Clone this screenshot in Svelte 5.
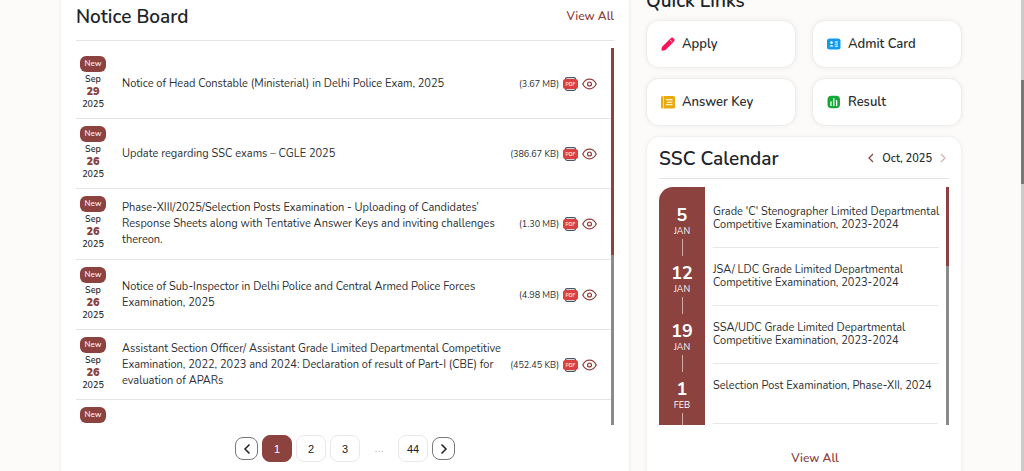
<script>
  const notices = [
    { day: '29', title: 'Notice of Head Constable (Ministerial) in Delhi Police Exam, 2025', size: '3.67 MB' },
    { day: '26', title: 'Update regarding SSC exams – CGLE 2025', size: '386.67 KB' },
    {
      day: '26',
      title: 'Phase-XIII/2025/Selection Posts Examination - Uploading of Candidates’\nResponse Sheets along with Tentative Answer Keys and inviting challenges\nthereon.',
      size: '1.30 MB'
    },
    {
      day: '26',
      title: 'Notice of Sub-Inspector in Delhi Police and Central Armed Police Forces\nExamination, 2025',
      size: '4.98 MB'
    },
    {
      day: '26',
      title: 'Assistant Section Officer/ Assistant Grade Limited Departmental Competitive\nExamination, 2022, 2023 and 2024: Declaration of result of Part-I (CBE) for\nevaluation of APARs',
      size: '452.45 KB'
    }
  ];
  const links = [
    { label: 'Apply', icon: 'pen' },
    { label: 'Admit Card', icon: 'card' },
    { label: 'Answer Key', icon: 'key' },
    { label: 'Result', icon: 'chart' }
  ];
  const events = [
    { day: '5', month: 'JAN', title: "Grade 'C' Stenographer Limited Departmental\nCompetitive Examination, 2023-2024" },
    { day: '12', month: 'JAN', title: 'JSA/ LDC Grade Limited Departmental\nCompetitive Examination, 2023-2024' },
    { day: '19', month: 'JAN', title: 'SSA/UDC Grade Limited Departmental\nCompetitive Examination, 2023-2024' },
    { day: '1', month: 'FEB', title: 'Selection Post Examination, Phase-XII, 2024' }
  ];
  let page = $state(1);
</script>

<main class="page">
  <section class="card board">
    <header class="head">
      <h2>Notice Board</h2>
      <a class="all" href="#notices">View All</a>
    </header>
    <div class="scroller notices">
      <ul>
        {#each notices as n}
          <li class="notice">
            <div class="date">
              <span class="new">New</span>
              <span>Sep</span>
              <b>{n.day}</b>
              <span>2025</span>
            </div>
            <p>{n.title}</p>
            <div class="file">
              <span class="size">({n.size})</span>
              <a href="#pdf" aria-label="Download PDF">
                <svg width="15" height="14" viewBox="0 0 15 14">
                  <path d="M2.5 3V2.2Q2.5 .7 4 .7H11Q12.500 .7 12.500 2.200V3M2.500 11V11.800Q2.500 13.300 4 13.300H11Q12.500 13.300 12.500 11.800V11" fill="#fff" stroke="#4b5563" stroke-width="1.300" />
                  <rect x="0" y="2" width="15" height="10" rx="2.500" fill="#d9403f" />
                  <text x="7.500" y="8.900" text-anchor="middle" font-size="5" font-weight="700" fill="#fbdcdc">PDF</text>
                </svg>
              </a>
              <a href="#view" aria-label="View notice">
                <svg width="15" height="12" viewBox="0 0 16 12" fill="none" stroke="#93423e" stroke-width="1.300">
                  <path d="M.8 6C2.400 2.700 4.900 .9 8 .9S13.600 2.700 15.200 6C13.600 9.300 11.100 11.100 8 11.100S2.400 9.300 .8 6Z" />
                  <circle cx="8" cy="6" r="2.100" />
                </svg>
              </a>
            </div>
          </li>
        {/each}
        <li class="notice"><div class="date"><span class="new">New</span></div></li>
      </ul>
      <div class="track"><div class="thumb" style="height:55%"></div></div>
    </div>
    <nav class="pager" aria-label="Pages">
      <button class="arrow" aria-label="Previous page">
        <svg width="8" height="12" viewBox="0 0 8 12"><path d="M6.500 1.500 2 6l4.500 4.500" /></svg>
      </button>
      {#each [1, 2, 3] as p}
        <button class:on={page === p} onclick={() => (page = p)}>{p}</button>
      {/each}
      <span class="dots">...</span>
      <button class:on={page === 44} onclick={() => (page = 44)}>44</button>
      <button class="arrow" aria-label="Next page">
        <svg width="8" height="12" viewBox="0 0 8 12"><path d="M1.500 1.500 6 6l-4.500 4.500" /></svg>
      </button>
    </nav>
  </section>

  <div class="side">
    <h2>Quick Links</h2>
    <div class="links">
      {#each links as l}
        <a class="link" href="#{l.icon}">
          <svg width="14" height="14" viewBox="0 0 14 14">
            {#if l.icon === 'pen'}
              <path d="M1.200 12.900 1.700 10.300 10 2Q11.100 .9 12.200 2T12.200 4.200L3.900 12.400Z" fill="#fb1558" stroke="#fb1558" stroke-width="1.600" stroke-linejoin="round" />
              <path d="M9.300 3.100 11.100 4.900" stroke="#fff" stroke-width=".8" />
            {:else if l.icon === 'card'}
              <rect x="0" y="1.500" width="13.500" height="11" rx="2.500" fill="#109bee" />
              <circle cx="4.500" cy="5.600" r="1.300" fill="#fff" />
              <path d="M2.300 9.500Q4.500 6.300 6.700 9.500Z" fill="#fff" />
              <path d="M7.800 5H11M7.800 7.100H11M7.800 9.200H11" stroke="#fff" />
            {:else if l.icon === 'key'}
              <rect x="0" y="1" width="14" height="12.500" rx="1.600" fill="#e9aa10" />
              <path d="M2.500 1V13.500" stroke="#fff3cf" stroke-width=".8" />
              <path d="M5 4.700H11.500M6 7.200H11.500M5 9.700H11.500" stroke="#fff" />
            {:else}
              <rect x=".5" y=".8" width="12.500" height="12.500" rx="4" fill="#17a736" />
              <path d="M4 7V10.500M6.800 3.700V10.500M9.600 5.700V10.500" stroke="#fff" stroke-width="1.300" stroke-linecap="round" />
            {/if}
          </svg>
          {l.label}
        </a>
      {/each}
    </div>

    <section class="card calendar">
      <header class="head">
        <h2>SSC Calendar</h2>
        <div class="month">
          <button aria-label="Previous month"><svg width="6" height="10" viewBox="0 0 6 10"><path d="M5 1 1 5l4 4" /></svg></button>
          <span>Oct, 2025</span>
          <button aria-label="Next month" disabled><svg width="6" height="10" viewBox="0 0 6 10"><path d="M1 1l4 4-4 4" /></svg></button>
        </div>
      </header>
      <div class="scroller events">
        <ul>
          {#each events as e}
            <li class="event">
              <div class="when"><b>{e.day}</b><span>{e.month}</span><i></i></div>
              <p>{e.title}</p>
            </li>
          {/each}
        </ul>
        <div class="track"><div class="thumb" style="height:33%"></div></div>
      </div>
      <a class="all more" href="#calendar">View All</a>
    </section>
  </div>
  <div class="pagebar"></div>
</main>

<style>
  :global(body) {
    margin: 0;
    background: #fcfbfa;
  }
  .page {
    position: relative;
    box-sizing: border-box;
    height: 100vh;
    overflow: hidden;
    display: grid;
    grid-template-columns: minmax(0, 570fr) minmax(0, 316fr);
    gap: 16px;
    padding: 0 62px 0 60px;
    font-family: Nunito, Lato, sans-serif;
    font-size: 11px;
    color: #2b2f33;
  }
  h2, p, ul {
    margin: 0;
    padding: 0;
  }
  ul {
    flex: 1;
    min-width: 0;
    list-style: none;
  }
  h2 {
    font-size: 19px;
    line-height: 24px;
    font-weight: 600;
    color: #212529;
  }
  a {
    color: inherit;
    text-decoration: none;
  }
  svg {
    display: block;
    flex: none;
  }
  .card {
    box-sizing: border-box;
    background: #fff;
    border: 1px solid #f3f2f1;
    box-shadow: 0 0 4px #0000000a;
  }
  .board {
    margin-top: -16px;
    margin-bottom: -16px;
    padding: 20px 15px 0;
    border-radius: 16px;
  }
  .head {
    display: flex;
    justify-content: space-between;
    border-bottom: 1px solid #e4e4e4;
  }
  .board .head {
    height: 35px;
  }
  .all {
    font-size: 12px;
    line-height: 22px;
    font-weight: 600;
    color: #8c423e;
  }
  .scroller {
    display: flex;
    overflow: hidden;
  }
  .notices {
    height: 377px;
    margin-top: 7px;
  }
  .notices ul {
    padding-top: 1px;
  }
  .track {
    flex: none;
    width: 3px;
    background: #8a8a8a;
  }
  .thumb {
    background: #8c423e;
  }
  .notice {
    box-sizing: border-box;
    height: 70px;
    display: flex;
    align-items: center;
    border-bottom: 1px solid #e4e4e4;
  }
  .notice:nth-child(3) {
    height: 71px;
  }
  .date {
    align-self: flex-start;
    display: flex;
    flex-direction: column;
    align-items: center;
    width: 26px;
    margin: 7px 16px 0 4px;
    font-size: 9px;
    line-height: 12px;
    font-weight: 600;
  }
  .date b {
    font-size: 11px;
    line-height: 13px;
    color: #8c423e;
  }
  .new {
    width: 26px;
    margin-bottom: 1px;
    border-radius: 6px;
    background: #8c423e;
    color: #fbe4ea;
    font-size: 8px;
    line-height: 16px;
    text-align: center;
  }
  .notice p {
    flex: 1;
    line-height: 16px;
    white-space: pre;
  }
  .file {
    display: flex;
    align-items: center;
    gap: 4px;
    margin-right: 14px;
  }
  .size {
    font-size: 9px;
  }
  .pager {
    display: flex;
    justify-content: center;
    align-items: center;
    gap: 4px;
    margin-top: 10px;
  }
  .pager button, .dots {
    box-sizing: border-box;
    width: 30px;
    height: 27px;
    padding: 0;
    border: 1px solid #e8e8e8;
    border-radius: 8px;
    background: #fff;
    color: #222;
    font: 11px "Liberation Sans", Arial, sans-serif;
  }
  .pager .dots {
    border-color: transparent;
    color: #bbb;
    line-height: 25px;
    text-align: center;
  }
  .pager .on {
    background: #8c423e;
    border-color: #8c423e;
    color: #fff;
  }
  .pager .arrow {
    display: grid;
    place-items: center;
    width: 23px;
    height: 23px;
    border-color: #777;
  }
  .arrow path {
    fill: none;
    stroke: #222;
    stroke-width: 1.5;
  }
  .side {
    margin-top: -11px;
    display: flex;
    flex-direction: column;
  }
  .links {
    display: grid;
    grid-template-columns: 1fr 1fr;
    gap: 10px 16px;
    margin-top: 7px;
  }
  .link {
    box-sizing: border-box;
    height: 48px;
    display: flex;
    align-items: center;
    gap: 7px;
    padding-left: 14px;
    border: 1px solid #efedec;
    border-radius: 13px;
    background: #fff;
    box-shadow: 0 0 5px #00000010;
    font-size: 13px;
    font-weight: 600;
  }
  .calendar {
    flex: 1;
    margin-top: 10px;
    margin-bottom: -20px;
    padding: 10px 12px 0;
    border-radius: 14px;
    display: flex;
    flex-direction: column;
  }
  .calendar .head {
    height: 31px;
  }
  .month {
    display: flex;
    align-items: center;
    gap: 8px;
    height: 22px;
    padding-right: 3px;
    font-weight: 600;
  }
  .month button {
    padding: 0;
    border: 0;
    background: none;
  }
  .month button:disabled {
    opacity: .4;
  }
  .month path {
    fill: none;
    stroke: #8c423e;
    stroke-width: 1.2;
  }
  .events {
    height: 238px;
    margin-top: 8px;
  }
  .events ul {
    padding-top: 3px;
    border-top-left-radius: 14px;
    background: linear-gradient(90deg, #8c423e 46px, transparent 46px);
  }
  .event {
    display: flex;
    height: 58px;
  }
  .event:last-child {
    height: 60px;
  }
  .when {
    flex: none;
    width: 46px;
    display: flex;
    flex-direction: column;
    align-items: center;
    color: #fff;
    font-size: 9px;
    line-height: 12px;
    padding-top: 15px;
    box-sizing: border-box;
  }
  .when b {
    font-size: 18px;
    line-height: 20px;
  }
  .when i {
    width: 1px;
    height: 17px;
    flex: none;
    margin-top: 2px;
    background: #d3a9a6;
  }
  .event p {
    flex: 1;
    margin: 0 8px;
    padding-top: 15px;
    line-height: 13px;
    white-space: pre;
    border-bottom: 1px solid #e8e8e8;
  }
  .more {
    align-self: center;
    margin-top: 22px;
    margin-left: 22px;
  }
  .pagebar {
    position: absolute;
    top: 0;
    right: 0;
    width: 3px;
    height: 100%;
    background: linear-gradient(#ccc 17%, #777 17%, #777 39%, #ccc 39%);
  }
</style>
